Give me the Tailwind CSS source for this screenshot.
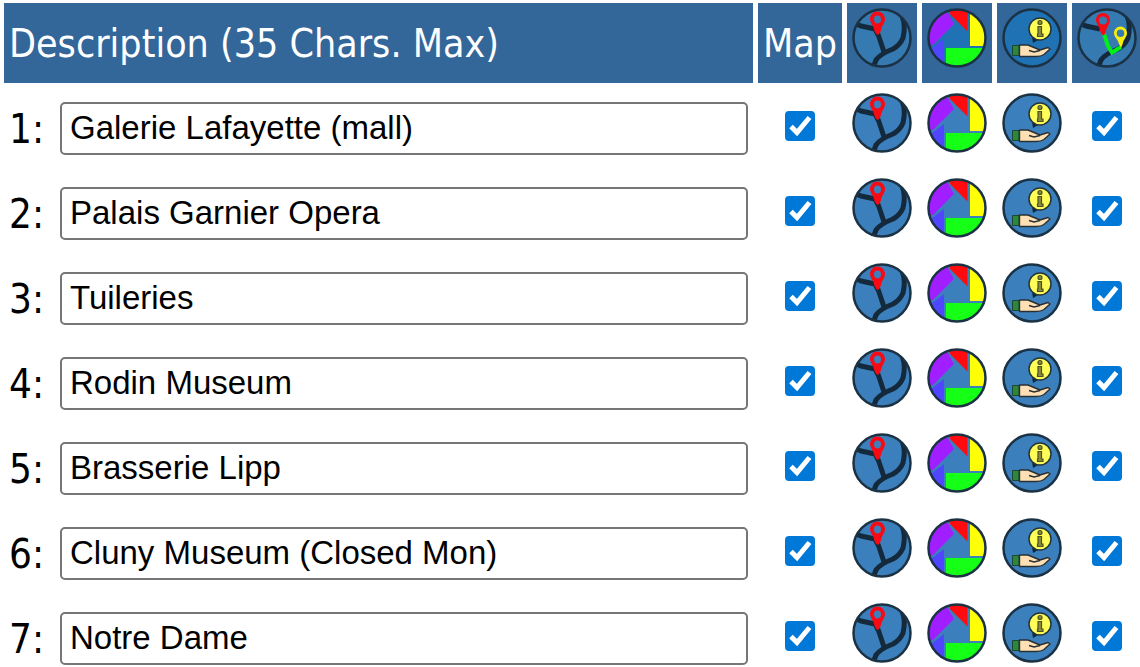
<!DOCTYPE html>
<html lang="en">
<head>
<meta charset="utf-8">
<meta name="viewport" content="width=device-width, initial-scale=1">
<title>Places</title>
<script src="https://cdn.jsdelivr.net/npm/@tailwindcss/browser@4"></script>
</head>
<body class="bg-white text-black">
<svg class="absolute size-0" aria-hidden="true">
  <defs>
    <clipPath id="disc"><circle cx="30" cy="30" r="28"/></clipPath>
  </defs>
  <symbol id="i-map" viewBox="0 0 60 60">
    <circle cx="30" cy="30" r="28" fill="currentColor"/>
    <g clip-path="url(#disc)" fill="none" stroke="#142a3c" stroke-width="5" stroke-linejoin="round">
      <path d="M2 15L9 18L23 21Q27 27 29 35L32 44"/>
      <path d="M50 8Q54 17 51 30Q48 37 41 41Q28 46 24 52L21 60"/>
    </g>
    <circle cx="30" cy="30" r="28.500" fill="none" stroke="#1b3245" stroke-width="2.5"/>
    <path fill="#f80a14" fill-rule="evenodd" d="M25.500 3.500C21.500 3.500 18 7 18 11C18 15 22 18 22.500 23Q24 26.500 26 27Q28.500 25 29 22C29.500 18 33 15 33 11C33 7 29.500 3.500 25.500 3.500ZM25.500 7.500C28 7.500 29 9 29 11.500C29 14 27.500 15.500 25.500 15.500C23.500 15.500 22 14 22 11.500C22 9 23 7.500 25.500 7.500Z"/>
  </symbol>
  <symbol id="i-photo" viewBox="0 0 60 60">
    <circle cx="30" cy="30" r="28" fill="currentColor"/>
    <g clip-path="url(#disc)">
      <path fill="#a01eff" d="M0 0H18L27 16L6 37L0 38Z"/>
      <path fill="#ff0a0e" d="M22 0H40.500V23.500L23 6Z"/>
      <path fill="#ffff08" d="M43 0H60V38H43Z"/>
      <path fill="#16ff16" d="M19 40H60V60H19Z"/>
      <path fill="#5046ff" d="M17 31V60H0V44Z"/>
    </g>
    <circle cx="30" cy="30" r="28.500" fill="none" stroke="#1b3245" stroke-width="2.5"/>
  </symbol>
  <symbol id="i-info" viewBox="0 0 60 60">
    <circle cx="30" cy="30" r="28.500" fill="currentColor" stroke="#1b3245" stroke-width="2.500"/>
    <path d="M30 29L31 35L36 32" fill="#10283c"/>
    <circle cx="38" cy="21" r="11" fill="#ffff58" stroke="#24343c" stroke-width="1.500"/>
    <g fill="#8d8c3d" stroke="#4b5126" stroke-width="1.200"><circle cx="38" cy="14.500" r="2"/><path d="M36 18.500H39.500V26H41V28.500H35.500V26H36Z"/></g>
    <path fill="#2d8738" stroke="#1c4635" d="M10.500 37.500H17V47.500H10.500Z"/>
    <path fill="#ffe0b5" stroke="#283034" stroke-width="1.400" stroke-linejoin="round" d="M17.500 37H26L32 39.500L38 42L46 39.500L48 41L42 46.500Q39 48.500 34 48.500H17.500Z"/>
    <path fill="none" stroke="#283034" stroke-width="1.500" d="M27 42.500L32 44L38 42.500"/>
  </symbol>
  <symbol id="i-route" viewBox="0 0 60 60">
    <circle cx="30" cy="30" r="28" fill="currentColor"/>
    <g clip-path="url(#disc)" fill="none" stroke="#142a3c" stroke-width="5">
      <path d="M2 15L9 18L23 21"/><path d="M50 8Q54 17 51 30Q48 37 41 41Q28 46 24 52L21 60"/>
    </g>
    <circle cx="30" cy="30" r="28.500" fill="none" stroke="#1b3245" stroke-width="2.500"/>
    <path d="M27 26L31 38L35 44.500L44 39" fill="none" stroke="#00ef18" stroke-width="4"/>
    <path fill="#f80a14" fill-rule="evenodd" d="M26 5C22 5 19 8 19 12C19 16 23 19 23.500 24Q24.500 27 26.500 27.500Q28.500 26 29 23C29.500 19 33 16 33 12C33 8 30 5 26 5ZM26 8.500A4 4 0 1 1 26 16.500A4 4 0 1 1 26 8.500Z"/>
    <path fill="#f6ee0c" fill-rule="evenodd" d="M43.500 18.500C40 18.500 37 21.500 37 25C37 29 41 31 42 36L44 40L46 35C46.500 31 50 29 50 25C50 21.500 47 18.500 43.500 18.500ZM43.500 21.500A3.700 3.700 0 1 1 43.500 29A3.700 3.700 0 1 1 43.500 21.500Z"/>
  </symbol>
</svg>

<main class="h-screen overflow-hidden">
  <table class="-ml-px -mt-0.5 w-[calc(100%+8px)] table-fixed border-separate border-spacing-[5px] font-['DejaVu_Sans_Condensed','DejaVu_Sans',sans-serif] text-[39px] leading-12">
    <colgroup>
      <col><col class="w-[84px]"><col class="w-[70px]"><col class="w-[70px]"><col class="w-[70px]"><col class="w-[70px]">
    </colgroup>
    <thead>
      <tr class="h-20 text-[#1f72b4]">
        <th scope="col" class="bg-[#336699] px-[5px] pt-0.5 pb-0 text-left font-normal text-white">Description (35 Chars. Max)</th>
        <th scope="col" class="bg-[#336699] px-0 pt-0.5 pb-0 text-center font-normal text-white">Map</th>
        <th scope="col" class="bg-[#336699] p-[5px] align-top text-[#367ab2]"><svg class="size-[60px]" role="img" aria-label="Map link"><use href="#i-map"/></svg></th>
        <th scope="col" class="bg-[#336699] p-[5px] align-top"><svg class="size-[60px]" role="img" aria-label="Photos"><use href="#i-photo"/></svg></th>
        <th scope="col" class="bg-[#336699] p-[5px] align-top"><svg class="size-[60px]" role="img" aria-label="Information"><use href="#i-info"/></svg></th>
        <th scope="col" class="bg-[#336699] p-[5px] align-top text-[#367ab2]"><svg class="size-[60px]" role="img" aria-label="Route"><use href="#i-route"/></svg></th>
      </tr>
    </thead>
    <tbody id="rows"></tbody>
  </table>
</main>

<script>
const places = ["Galerie Lafayette (mall)", "Palais Garnier Opera", "Tuileries", "Rodin Museum", "Brasserie Lipp", "Cluny Museum (Closed Mon)", "Notre Dame"];
const check = label => `
  <td class="p-0 pb-1">
    <label class="mx-auto grid size-[30px] cursor-pointer">
      <input type="checkbox" checked aria-label="${label}" class="peer col-start-1 row-start-1 size-[30px] appearance-none rounded-[4px] border-2 border-[#767676] bg-white checked:border-[#0078d7] checked:bg-[#0078d7]">
      <svg viewBox="0 0 30 30" class="pointer-events-none invisible col-start-1 row-start-1 size-[30px] peer-checked:visible" fill="none" stroke="#fff" stroke-width="5"><path d="M6 15.500L12 21.500L24.500 6.500"/></svg>
    </label>
  </td>`;
const icon = (id, label) => `
  <td class="p-[5px] align-top"><button type="button" aria-label="${label}" class="block size-[60px] cursor-pointer text-[#3b80bc]"><svg class="size-[60px]"><use href="#${id}"/></svg></button></td>`;
document.getElementById("rows").innerHTML = places.map((name, i) => `
  <tr class="h-20">
    <td class="px-[5px] py-0">
      <div class="flex items-center">
        <label for="place-${i + 1}" class="w-[51px] shrink-0 pt-0.5 text-[40px]">${i + 1}:</label>
        <input id="place-${i + 1}" type="text" maxlength="35" value="${name}" class="h-[53px] min-w-0 flex-1 rounded-[5px] border-2 border-[#767676] bg-white px-2 font-['Liberation_Sans',Arial,sans-serif] text-[33px]">
      </div>
    </td>
    ${check("Show " + name + " on map")}
    ${icon("i-map", "Map of " + name)}
    ${icon("i-photo", "Photos of " + name)}
    ${icon("i-info", "Information on " + name)}
    ${check("Include " + name + " in route")}
  </tr>`).join("");
</script>
</body>
</html>
